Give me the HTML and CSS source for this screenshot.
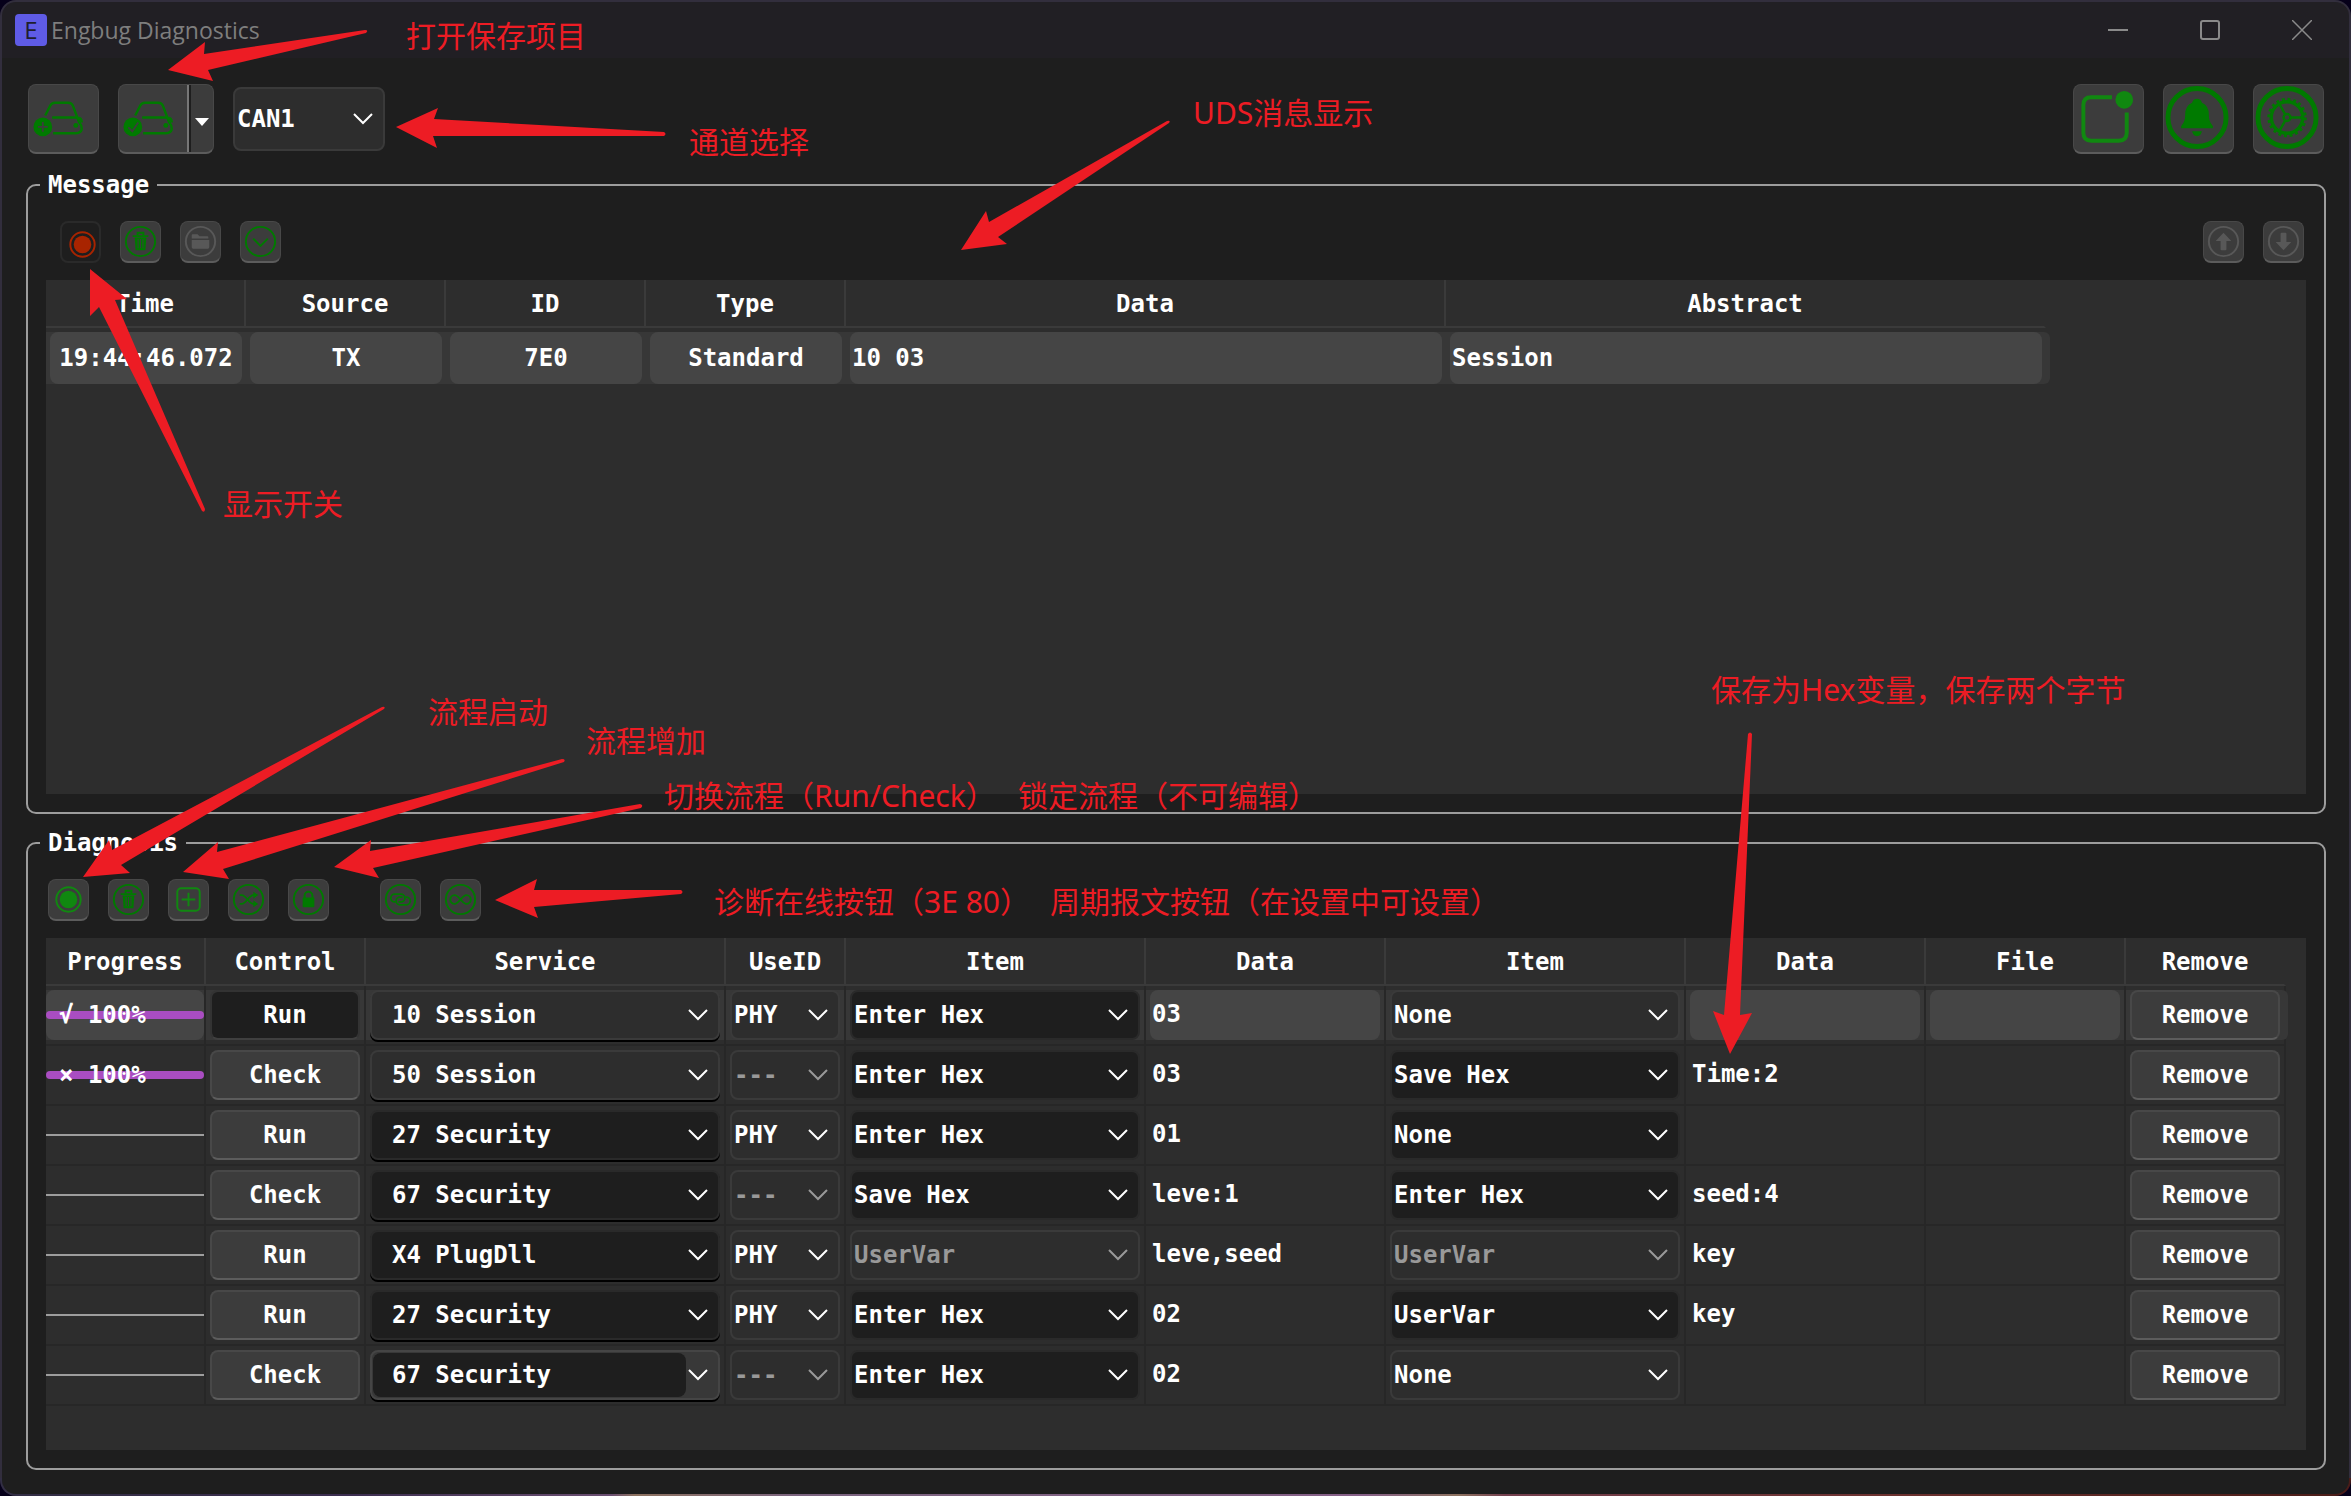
FILE: index.html
```html
<!DOCTYPE html>
<html lang="en">
<head>
<meta charset="utf-8">
<title>Engbug Diagnostics</title>
<link rel="stylesheet" href="styles.css">
</head>
<body>
<svg class="defs" aria-hidden="true">
  <symbol id="ring" viewBox="0 0 40 40"><circle cx="20" cy="20" r="15" fill="none" stroke="currentColor" stroke-width="2"/></symbol>
  <symbol id="record" viewBox="0 0 40 40"><circle cx="20" cy="20" r="12.5" fill="none" stroke="currentColor" stroke-width="2"/><circle cx="20" cy="20" r="9" fill="currentColor"/></symbol>
  <symbol id="trash" viewBox="0 0 40 40"><use href="#ring"/><path d="M12 14.500h16M17 14v-3h6v3" fill="none" stroke="currentColor" stroke-width="2"/><path fill="currentColor" fill-rule="evenodd" d="M14 16h12l-1 13H15zM17 17.500v9.500h1v-9.500zM19.500 17.500v9.500h1v-9.500zM22 17.500v9.500h1v-9.500z"/></symbol>
  <symbol id="folder" viewBox="0 0 40 40"><use href="#ring"/><path fill="currentColor" d="M11 13.500q0-1 1-1h5l2 2h8q1 0 1 1V17H11zM11 18.500h18V26q0 1.500-1.500 1.500h-15Q11 27.500 11 26z"/></symbol>
  <symbol id="expand" viewBox="0 0 40 40"><use href="#ring"/><path d="M12.500 17l7.500 7.500 7.500-7.500" fill="none" stroke="currentColor" stroke-width="2"/></symbol>
  <symbol id="up" viewBox="0 0 40 40"><use href="#ring"/><path fill="currentColor" d="M20 11l8 8.500h-5V28q0 1-1 1h-4q-1 0-1-1v-8.500h-5z"/></symbol>
  <symbol id="down" viewBox="0 0 40 40"><use href="#ring"/><path fill="currentColor" d="M20 29l8-8.500h-5V12q0-1-1-1h-4q-1 0-1 1v8.500h-5z"/></symbol>
  <symbol id="plus" viewBox="0 0 40 40"><rect x="8.500" y="8.500" width="23" height="23" rx="4" fill="none" stroke="currentColor" stroke-width="2"/><path d="M13 20h14M20 13v14" stroke="currentColor" stroke-width="2"/></symbol>
  <symbol id="shuffle" viewBox="0 0 40 40"><use href="#ring"/><path d="M11 15.500h2c5 0 7 9 12 9h2M11 24.500h2c5 0 7-9 12-9h2" fill="none" stroke="currentColor" stroke-width="1.800"/><path fill="currentColor" d="M25 12l5 3.500-5 3.500zM25 21l5 3.500-5 3.500z"/></symbol>
  <symbol id="lock" viewBox="0 0 40 40"><use href="#ring"/><path d="M16 19v-3a4 4 0 0 1 8 0v3" fill="none" stroke="currentColor" stroke-width="2"/><rect x="14" y="18" width="12" height="10" rx="1" fill="currentColor"/></symbol>
  <symbol id="link" viewBox="0 0 40 40"><use href="#ring"/><g fill="none" stroke="currentColor" stroke-width="1.800"><path d="M15 22.500h-1a4 4 0 0 1 0-8h6.500a4 4 0 0 1 0 8H18"/><path d="M25 17.500h1a4 4 0 0 1 0 8h-6.500a4 4 0 0 1 0-8H22"/></g></symbol>
  <symbol id="loop" viewBox="0 0 40 40"><use href="#ring"/><path d="M20 20c-2.500-3-4-4.500-6-4.500a4.500 4.500 0 0 0 0 9c2 0 3.500-1.500 6-4.500s4-4.500 6-4.500a4.500 4.500 0 0 1 0 9c-2 0-3.500-1.500-6-4.500z" fill="none" stroke="currentColor" stroke-width="2"/></symbol>
  <symbol id="drive" viewBox="0 0 68 68"><path d="M16 32l5-10q1.500-3 5-3h13q4 0 5 3l6 16q3 4 3 7 0 5-6 5H24M23 34h25q5 0 5 5" transform="translate(0 -1)" fill="none" stroke="currentColor" stroke-width="2.500"/><circle cx="47" cy="41" r="2.500" fill="currentColor"/><circle cx="13.500" cy="42.500" r="9.500" fill="currentColor"/></symbol>
  <symbol id="arrow-chev" viewBox="0 0 20 12"><path d="M1 1l9 9 9-9" fill="none" stroke="currentColor" stroke-width="2"/></symbol>
</svg>

<div class="window">
  <header class="titlebar">
    <span class="logo">E</span>
    <h1 class="title">Engbug Diagnostics</h1>
    <div class="window-buttons">
      <button class="win" aria-label="Minimize"><svg viewBox="0 0 20 20"><path d="M0 10h20" stroke="currentColor" stroke-width="2"/></svg></button>
      <button class="win" aria-label="Maximize"><svg viewBox="0 0 20 20"><rect x="1" y="1" width="18" height="18" rx="2" fill="none" stroke="currentColor" stroke-width="2"/></svg></button>
      <button class="win" aria-label="Close"><svg viewBox="0 0 20 20"><path d="M0 0l20 20M20 0L0 20" stroke="currentColor" stroke-width="1.500"/></svg></button>
    </div>
  </header>

  <main class="content">
    <div class="main-toolbar">
      <button class="big" aria-label="New project"><svg viewBox="0 0 68 68"><use href="#drive"/><path d="M8.500 42.500h10M13.500 37.500v10" stroke="#3c3c3c" stroke-width="1.800"/></svg></button>
      <div class="split">
        <button class="split-main" aria-label="Open project"><svg viewBox="0 0 68 68"><use href="#drive"/><path d="M9 43l4 4 6-9" fill="none" stroke="#3c3c3c" stroke-width="1.800"/></svg></button>
        <button class="split-menu" aria-label="More"><svg viewBox="0 0 14 10"><path d="M0 1h14L7 9z" fill="#fff"/></svg></button>
      </div>
      <select class="combo channel" aria-label="Channel"><option>CAN1</option></select>
      <div class="right">
        <button class="big" aria-label="Status"><svg class="lively" viewBox="0 0 68 68"><path d="M38 12.500H17q-8 0-8 8v28q0 8 8 8h28q8 0 8-8V28" fill="none" stroke="currentColor" stroke-width="4"/><circle cx="50.500" cy="15" r="9" fill="currentColor"/></svg></button>
        <button class="big" aria-label="Alerts"><svg viewBox="0 0 68 68"><circle cx="33" cy="33" r="29.500" fill="none" stroke="currentColor" stroke-width="5"/><path fill="currentColor" d="M33 14q4 0 5 4 7 3 7 12 0 7 3 10 2 2 1 4H17q-1-2 1-4 3-3 3-10 0-9 7-12 1-4 5-4zM28 47h10q-1 5-5 5t-5-5z"/></svg></button>
        <button class="big" aria-label="Settings"><svg viewBox="0 0 68 68"><g fill="none" stroke="currentColor"><circle cx="33" cy="33" r="29.500" stroke-width="5"/><circle cx="33" cy="33" r="16" stroke-width="3.500"/><circle cx="33" cy="33" r="18.500" stroke-width="3" stroke-dasharray="2.900 2.911"/><circle cx="33" cy="33" r="3.500" stroke-width="2.500"/><path d="M37 33h12M31 29.500L25 19M31 36.500L25 47" stroke-width="2.500"/></g></svg></button>
      </div>
    </div>

    <fieldset class="group grow">
      <legend>Message</legend>
      <div class="toolbar inset">
        <button class="tool pressed" aria-label="Record"><svg><use href="#record"/></svg></button>
        <button class="tool" aria-label="Clear"><svg><use href="#trash"/></svg></button>
        <button class="tool" aria-label="Open" disabled><svg><use href="#folder"/></svg></button>
        <button class="tool" aria-label="Scroll"><svg><use href="#expand"/></svg></button>
        <div class="right">
          <button class="tool" aria-label="Previous" disabled><svg><use href="#up"/></svg></button>
          <button class="tool" aria-label="Next" disabled><svg><use href="#down"/></svg></button>
        </div>
      </div>
      <div class="sheet">
        <table class="messages">
          <colgroup><col class="w200"><col class="w200"><col class="w200"><col class="w200"><col class="w600"><col class="w600"></colgroup>
          <thead><tr><th>Time</th><th>Source</th><th>ID</th><th>Type</th><th>Data</th><th>Abstract</th></tr></thead>
          <tbody><tr>
            <td><div class="band"><div class="fill center">19:44:46.072</div></div></td>
            <td><div class="band"><div class="fill center">TX</div></div></td>
            <td><div class="band"><div class="fill center">7E0</div></div></td>
            <td><div class="band"><div class="fill center">Standard</div></div></td>
            <td><div class="band"><div class="fill">10 03</div></div></td>
            <td><div class="band last"><div class="fill">Session</div></div></td>
          </tr></tbody>
        </table>
      </div>
    </fieldset>

    <fieldset class="group">
      <legend>Diagnosis</legend>
      <div class="toolbar">
        <button class="tool" aria-label="Start"><svg class="lively"><use href="#record"/></svg></button>
        <button class="tool" aria-label="Clear"><svg><use href="#trash"/></svg></button>
        <button class="tool" aria-label="Add"><svg class="lively"><use href="#plus"/></svg></button>
        <button class="tool" aria-label="Switch"><svg><use href="#shuffle"/></svg></button>
        <button class="tool" aria-label="Lock"><svg><use href="#lock"/></svg></button>
        <button class="tool spaced" aria-label="Keep online"><svg><use href="#link"/></svg></button>
        <button class="tool" aria-label="Periodic"><svg><use href="#loop"/></svg></button>
      </div>
      <div class="sheet">
        <table class="steps">
          <colgroup><col class="w160"><col class="w160"><col class="w360"><col class="w120"><col class="w300"><col class="w240"><col class="w300"><col class="w240"><col class="w200"><col class="w160"></colgroup>
          <thead><tr><th>Progress</th><th>Control</th><th>Service</th><th>UseID</th><th>Item</th><th>Data</th><th>Item</th><th>Data</th><th>File</th><th>Remove</th></tr></thead>
          <tbody>
            <tr class="selected">
              <td class="flush"><div class="band"><div class="fill progress done"><span>√ 100%</span></div></div></td>
              <td><div class="band"><button class="action active">Run</button></div></td>
              <td><div class="band"><select class="combo service" aria-label="Service"><option>10 Session</option></select></div></td>
              <td><div class="band"><select class="combo" aria-label="Use ID"><option>PHY</option></select></div></td>
              <td><div class="band"><select class="combo dark" aria-label="Item"><option>Enter Hex</option></select></div></td>
              <td><div class="band"><div class="fill">03</div></div></td>
              <td><div class="band"><select class="combo" aria-label="Item"><option>None</option></select></div></td>
              <td><div class="band"><div class="fill"></div></div></td>
              <td><div class="band"><div class="fill"></div></div></td>
              <td><div class="band last"><button class="action">Remove</button></div></td>
            </tr>
            <tr>
              <td class="flush"><div class="band"><div class="progress done"><span>× 100%</span></div></div></td>
              <td><div class="band"><button class="action">Check</button></div></td>
              <td><div class="band"><select class="combo service" aria-label="Service"><option>50 Session</option></select></div></td>
              <td><div class="band"><select class="combo" aria-label="Use ID" disabled><option>---</option></select></div></td>
              <td><div class="band"><select class="combo dark" aria-label="Item"><option>Enter Hex</option></select></div></td>
              <td><div class="band"><div class="value">03</div></div></td>
              <td><div class="band"><select class="combo dark" aria-label="Item"><option>Save Hex</option></select></div></td>
              <td><div class="band"><div class="value">Time:2</div></div></td>
              <td></td>
              <td><div class="band"><button class="action">Remove</button></div></td>
            </tr>
            <tr>
              <td class="flush"><div class="band"><div class="progress"></div></div></td>
              <td><div class="band"><button class="action">Run</button></div></td>
              <td><div class="band"><select class="combo service dark" aria-label="Service"><option>27 Security</option></select></div></td>
              <td><div class="band"><select class="combo" aria-label="Use ID"><option>PHY</option></select></div></td>
              <td><div class="band"><select class="combo dark" aria-label="Item"><option>Enter Hex</option></select></div></td>
              <td><div class="band"><div class="value">01</div></div></td>
              <td><div class="band"><select class="combo dark" aria-label="Item"><option>None</option></select></div></td>
              <td></td>
              <td></td>
              <td><div class="band"><button class="action">Remove</button></div></td>
            </tr>
            <tr>
              <td class="flush"><div class="band"><div class="progress"></div></div></td>
              <td><div class="band"><button class="action">Check</button></div></td>
              <td><div class="band"><select class="combo service dark" aria-label="Service"><option>67 Security</option></select></div></td>
              <td><div class="band"><select class="combo" aria-label="Use ID" disabled><option>---</option></select></div></td>
              <td><div class="band"><select class="combo dark" aria-label="Item"><option>Save Hex</option></select></div></td>
              <td><div class="band"><div class="value">leve:1</div></div></td>
              <td><div class="band"><select class="combo dark" aria-label="Item"><option>Enter Hex</option></select></div></td>
              <td><div class="band"><div class="value">seed:4</div></div></td>
              <td></td>
              <td><div class="band"><button class="action">Remove</button></div></td>
            </tr>
            <tr>
              <td class="flush"><div class="band"><div class="progress"></div></div></td>
              <td><div class="band"><button class="action">Run</button></div></td>
              <td><div class="band"><select class="combo service dark" aria-label="Service"><option>X4 PlugDll</option></select></div></td>
              <td><div class="band"><select class="combo" aria-label="Use ID"><option>PHY</option></select></div></td>
              <td><div class="band"><select class="combo" aria-label="Item" disabled><option>UserVar</option></select></div></td>
              <td><div class="band"><div class="value">leve,seed</div></div></td>
              <td><div class="band"><select class="combo" aria-label="Item" disabled><option>UserVar</option></select></div></td>
              <td><div class="band"><div class="value">key</div></div></td>
              <td></td>
              <td><div class="band"><button class="action">Remove</button></div></td>
            </tr>
            <tr>
              <td class="flush"><div class="band"><div class="progress"></div></div></td>
              <td><div class="band"><button class="action">Run</button></div></td>
              <td><div class="band"><select class="combo service dark" aria-label="Service"><option>27 Security</option></select></div></td>
              <td><div class="band"><select class="combo" aria-label="Use ID"><option>PHY</option></select></div></td>
              <td><div class="band"><select class="combo dark" aria-label="Item"><option>Enter Hex</option></select></div></td>
              <td><div class="band"><div class="value">02</div></div></td>
              <td><div class="band"><select class="combo dark" aria-label="Item"><option>UserVar</option></select></div></td>
              <td><div class="band"><div class="value">key</div></div></td>
              <td></td>
              <td><div class="band"><button class="action">Remove</button></div></td>
            </tr>
            <tr>
              <td class="flush"><div class="band"><div class="progress"></div></div></td>
              <td><div class="band"><button class="action">Check</button></div></td>
              <td><div class="band"><div class="combo-edit"><select aria-label="Service"><option>67 Security</option></select><svg><use href="#arrow-chev"/></svg></div></div></td>
              <td><div class="band"><select class="combo" aria-label="Use ID" disabled><option>---</option></select></div></td>
              <td><div class="band"><select class="combo dark" aria-label="Item"><option>Enter Hex</option></select></div></td>
              <td><div class="band"><div class="value">02</div></div></td>
              <td><div class="band"><select class="combo" aria-label="Item"><option>None</option></select></div></td>
              <td></td>
              <td></td>
              <td><div class="band"><button class="action">Remove</button></div></td>
            </tr>
          </tbody>
        </table>
      </div>
    </fieldset>
  </main>
</div>

<div class="notes">
  <svg class="arrows" viewBox="0 0 2351 1496" aria-hidden="true">
    <path d="M168 70L205 42 204 54 365 30Q369 30 366 33L208 70 213 81z"/>
    <path d="M396 127L438 108 434 119 664 132Q667 134 664 136L433 136 437 148z"/>
    <path d="M90 269L127 299 115 300 205 509Q205 513 202 511L99 307 90 316z"/>
    <path d="M961 250L986 211 989 222 1167 121Q1171 120 1169 123L998 237 1007 244z"/>
    <path d="M83 877L109 840 112 850 382 707Q386 706 384 709L121 865 130 873z"/>
    <path d="M183 872L218 842 217 852 562 759Q566 759 564 762L223 869 229 879z"/>
    <path d="M334 867L371 840 370 851 640 804Q644 805 641 808L373 868 379 878z"/>
    <path d="M495 900L537 879 534 890 681 890Q684 892 681 894L534 907 538 918z"/>
    <path d="M1730 1054L1713 1011 1724 1015 1748 734Q1750 731 1752 734L1740 1015 1752 1013z"/>
  </svg>
  <span class="note n1">打开保存项目</span>
  <span class="note n2">通道选择</span>
  <span class="note n3">UDS消息显示</span>
  <span class="note n4">显示开关</span>
  <span class="note n5">流程启动</span>
  <span class="note n6">流程增加</span>
  <span class="note n7">切换流程（Run/Check）</span>
  <span class="note n8">锁定流程（不可编辑）</span>
  <span class="note n9">诊断在线按钮（3E 80）</span>
  <span class="note n10">周期报文按钮（在设置中可设置）</span>
  <span class="note n11">保存为Hex变量，保存两个字节</span>
</div>
</body>
</html>
```
FILE: styles.css
```css
:root {
  --bg: #1e1e1e;
  --sheet: #2d2d2d;
  --raised: #3c3c3c;
  --edge: #3a3a3a;
  --green: #007a00;
  --mono: "DejaVu Sans Mono", "Noto Sans CJK SC", monospace;
}

* { box-sizing: border-box; }

body {
  margin: 0;
  min-height: 100vh;
  display: flex;
  position: relative;
  background: #06001a;
  color: #fff;
  font: bold 24px/30px var(--mono);
}

.defs { position: absolute; width: 0; height: 0; }

button, select {
  margin: 0;
  color: inherit;
  font: inherit;
}

/* Window frame */
.window {
  flex: 1;
  display: flex;
  flex-direction: column;
  padding: 2px;
  border-radius: 16px;
  background:
    linear-gradient(90deg, #322e44 0%, #3c2e50 15%, #6b4f72 26%, #8d7260 27%, #7b6480 34%, #866088 58%, #8d7260 62%, #74404f 64%, #6d3230 80%, #4a1c18 100%) bottom / 100% 18px no-repeat,
    #322e3d;
}

.titlebar {
  display: flex;
  align-items: center;
  height: 56px;
  padding: 0 37px 0 13px;
  border-radius: 14px 14px 0 0;
  background: #211f24;
}

.logo {
  width: 32px;
  height: 32px;
  border-radius: 4px;
  background: #5f5be6;
  color: #1e1e2e;
  font: 24px/32px "Open Sans", sans-serif;
  text-align: center;
}

.title {
  margin: 0 0 0 4px;
  color: #7e7e7e;
  font: 23px/32px "Open Sans", "Noto Sans", sans-serif;
}

.window-buttons {
  display: flex;
  gap: 72px;
  margin-left: auto;
}

.win {
  width: 20px;
  height: 20px;
  padding: 0;
  border: 0;
  background: none;
  color: #8a8a8a;
}

.win svg { display: block; }

.content {
  flex: 1;
  display: flex;
  flex-direction: column;
  padding: 26px 23px 24px 24px;
  border-radius: 0 0 14px 14px;
  background: var(--bg);
}

/* Main toolbar */
.main-toolbar {
  display: flex;
  align-items: center;
  gap: 19px;
  margin: 0 2px 16px;
}

.right {
  display: flex;
  gap: 19px;
  margin-left: auto;
}

.big, .split, .tool, .action {
  border: 1px solid #484848;
  border-bottom: 2px solid #5c5c5c;
  border-radius: 8px;
  background: var(--raised);
}

.big, .split { height: 70px; }

.big, .split-main, .split-menu {
  padding: 0;
  color: var(--green);
}

.big { width: 71px; }

.big svg, .split-main svg { display: block; width: 68px; height: 67px; }

.split { display: flex; }

.split-main {
  width: 70px;
  border: 0;
  border-right: 2px solid #777;
  background: none;
}

.split-menu {
  width: 24px;
  border: 0;
  border-left: 2px solid var(--bg);
  background: none;
}

.split-menu svg { width: 14px; height: 10px; }

.lively { color: #108810; }

/* Group boxes */
.group {
  display: flex;
  flex-direction: column;
  min-width: 0;
  margin: 0;
  padding: 21px 18px 18px;
  border: 2px solid #9d9d9d;
  border-radius: 10px;
}

.group + .group { margin-top: 14px; }

.grow { flex: 1; }

legend {
  margin-left: -6px;
  padding: 0 8px;
}

.toolbar {
  display: flex;
  gap: 19px;
  margin-bottom: 17px;
  padding: 0 2px;
}

.inset { padding-left: 14px; }

.tool {
  width: 41px;
  height: 42px;
  padding: 0;
  color: var(--green);
}

.tool svg { display: block; width: 39px; height: 39px; }

.tool:disabled { color: #585858; }

.spaced { margin-left: 32px; }

.pressed {
  padding: 2px 0 0 1px;
  border: 2px solid #2a2a2a;
  background: var(--bg);
  color: #a82400;
}

/* Tables */
.sheet {
  flex: 1;
  min-height: 512px;
  background: var(--sheet);
}

table {
  table-layout: fixed;
  width: 0;
  border-spacing: 0;
}

.w120 { width: 120px; }
.w160 { width: 160px; }
.w200 { width: 200px; }
.w240 { width: 240px; }
.w300 { width: 300px; }
.w360 { width: 360px; }
.w600 { width: 600px; }

th {
  height: 48px;
  padding: 2px 0 0;
  border-right: 2px solid #3a3a3a;
  border-bottom: 2px solid #3a3a3a;
}

th:last-child { border-right-color: transparent; }

td { padding: 4px 0 0; }

.band { padding: 0 4px; }

.messages .band, .selected .band { background: #373737; }

.last {
  margin-right: -4px;
  padding-right: 8px;
  border-radius: 0 6px 6px 0;
}

.fill, .value {
  height: 50px;
  padding-left: 2px;
  line-height: 48px;
}

.fill {
  border-radius: 8px;
  background: #454545;
}

.messages .fill { height: 52px; line-height: 52px; }

.messages .center { padding: 0; text-align: center; }

.steps td {
  height: 60px;
  padding-bottom: 4px;
  border-right: 2px solid #272727;
  border-bottom: 2px solid #272727;
}

.flush .band { padding: 0; }

.progress {
  display: grid;
  align-items: center;
  height: 50px;
  padding: 0 0 0 13px;
  background: linear-gradient(#9d9d9d, #9d9d9d) center / 100% 2px no-repeat;
}

.done {
  background: none;
  position: relative;
  isolation: isolate;
}

.done.fill { background: #454545; }

.done::before {
  content: "";
  position: absolute;
  z-index: -1;
  inset: 21px 0;
  border-radius: 4px;
  background: #a94dc1;
}

.action {
  display: block;
  width: 100%;
  height: 50px;
  padding: 0;
  border-width: 2px;
}

.active {
  border-color: #333 #333 #3f3f3f;
  background: var(--bg);
}

/* Drop-downs */
.combo {
  appearance: none;
  display: block;
  width: 100%;
  height: 50px;
  padding: 0 34px 0 2px;
  border: 2px solid var(--edge);
  border-radius: 8px;
  background: var(--sheet) url("data:image/svg+xml,%3Csvg xmlns='http://www.w3.org/2000/svg' width='20' height='12'%3E%3Cpath d='M1 1l9 9 9-9' fill='none' stroke='white' stroke-width='2'/%3E%3C/svg%3E") right 10px center no-repeat;
  color: #fff;
}

.combo.dark {
  border-color: #2a2a2a;
  background-color: var(--bg);
}

.combo:disabled {
  opacity: 1;
  background-image: url("data:image/svg+xml,%3Csvg xmlns='http://www.w3.org/2000/svg' width='20' height='12'%3E%3Cpath d='M1 1l9 9 9-9' fill='none' stroke='%23999' stroke-width='2'/%3E%3C/svg%3E");
  color: #999;
}

.combo.service {
  padding-left: 20px;
  box-shadow: 0 2px 0 #000;
}

.channel {
  width: 152px;
  height: 64px;
}

.combo-edit {
  display: flex;
  align-items: center;
  height: 50px;
  padding: 1px 10px 1px 1px;
  border: 2px solid #454545;
  border-radius: 8px;
  background: #383838;
  box-shadow: 0 2px 0 #000;
}

.combo-edit select {
  appearance: none;
  flex: 1;
  height: 44px;
  margin-right: 2px;
  padding: 0 0 0 19px;
  border: 0;
  border-radius: 8px;
  background: var(--bg);
}

.combo-edit svg { width: 20px; height: 12px; }

/* Annotations that lie over the window */
.notes {
  position: absolute;
  inset: 0;
  overflow: hidden;
  pointer-events: none;
  color: #ed1c24;
  font: 30px/40px "Noto Sans", "Noto Sans CJK SC", sans-serif;
}

.arrows {
  position: absolute;
  top: 0;
  left: 0;
  width: 2351px;
  height: 1496px;
  fill: currentColor;
}

.note { position: absolute; white-space: nowrap; }

.n1 { left: 406px; top: 16px; }
.n2 { left: 689px; top: 122px; }
.n3 { left: 1193px; top: 93px; }
.n4 { left: 223px; top: 484px; }
.n5 { left: 428px; top: 692px; }
.n6 { left: 586px; top: 721px; }
.n7 { left: 664px; top: 776px; }
.n8 { left: 1018px; top: 776px; }
.n9 { left: 714px; top: 882px; }
.n10 { left: 1050px; top: 882px; }
.n11 { left: 1711px; top: 670px; }
```
